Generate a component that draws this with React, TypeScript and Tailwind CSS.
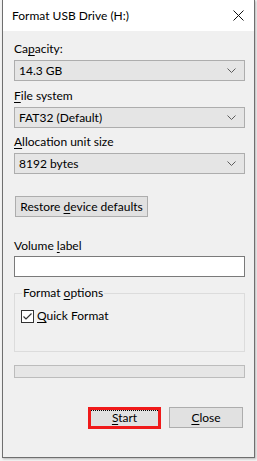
const font = { fontFamily: "Lato, 'Liberation Sans', sans-serif" };

function U({ children }: { children: React.ReactNode }) {
  return <span className="underline underline-offset-[2px] decoration-[1px]">{children}</span>;
}

function Chevron() {
  return (
    <svg width="9" height="5" viewBox="0 0 9 5" className="shrink-0">
      <polyline points="0.5,0.5 4.5,4.5 8.5,0.5" fill="none" stroke="#5c5c5c" strokeWidth="1" />
    </svg>
  );
}

function Combo({ value }: { value: string }) {
  return (
    <div className="mt-[3px] flex h-[21px] w-[231px] items-center justify-between border border-[#adadad] bg-[#e5e5e5] pl-[4px] pr-[8px]">
      <span>{value}</span>
      <Chevron />
    </div>
  );
}

function Label({ children, className = "" }: { children: React.ReactNode; className?: string }) {
  return <div className={`h-[16px] leading-[16px] ${className}`}>{children}</div>;
}

export default function App() {
  return (
    <div className="h-[461px] w-[257px] bg-[#f3f3f3] text-[12px] text-black" style={font}>
      <div className="ml-[2px] flex h-[458px] w-[253px] flex-col border-x border-b border-[#6f6f6f] bg-[#f0f0f0] shadow-[1px_1px_2px_rgba(0,0,0,0.25)]">
        <div className="flex h-[31px] items-center justify-between bg-white pl-[9px] pr-[9px]">
          <span className="text-[12px]">Format USB Drive (H:)</span>
          <svg width="11" height="11" viewBox="0 0 11 11" className="mr-[1px]">
            <path d="M0.5 0.5 L10.5 10.5 M10.5 0.5 L0.5 10.5" stroke="#111" strokeWidth="1" />
          </svg>
        </div>

        <div className="flex flex-col pl-[11px]">
          <Label className="mt-[10px]">
            Ca<U>p</U>acity:
          </Label>
          <Combo value="14.3 GB" />

          <Label className="mt-[7px]">
            <U>F</U>ile system
          </Label>
          <Combo value="FAT32 (Default)" />

          <Label className="mt-[6px]">
            <U>A</U>llocation unit size
          </Label>
          <Combo value="8192 bytes" />

          <button
            type="button"
            className="ml-[1px] mt-[22px] h-[21px] w-[133px] border border-[#adadad] bg-[#e1e1e1] text-center"
          >
            Restore <U>d</U>evice defaults
          </button>

          <Label className="mt-[21px]">
            Volume <U>l</U>abel
          </Label>
          <div className="mt-[2px] h-[21px] w-[231px] border border-[#7a7a7a] bg-white" />

          <fieldset className="mt-[8px] h-[67px] w-[231px] border border-[#dcdcdc] px-[6px]">
            <legend className="ml-[1px] px-[1px] leading-[16px]">
              Format <U>o</U>ptions
            </legend>
            <div className="mt-[6px] flex items-center gap-[3px]">
              <svg width="13" height="13" viewBox="0 0 13 13">
                <rect x="0.5" y="0.5" width="12" height="12" fill="white" stroke="#333" />
                <polyline points="2.5,6.5 5,9 10.5,3.5" fill="none" stroke="#333" strokeWidth="1.2" />
              </svg>
              <span>
                <U>Q</U>uick Format
              </span>
            </div>
          </fieldset>

          <div className="mt-[13px] h-[13px] w-[231px] border border-[#bcbcbc] bg-[#e6e6e6]" />

          <div className="mt-[29px] flex gap-[8px] pl-[74px]">
            <button
              type="button"
              className="relative h-[22px] w-[73px] border-[3px] border-[#f01a1a] bg-[#e1e1e1] text-center leading-[14px]"
            >
              <span className="absolute inset-x-0 top-0 border-t border-dotted border-black" />
              <U>S</U>tart
            </button>
            <button
              type="button"
              className="h-[21px] w-[74px] border border-[#adadad] bg-[#e1e1e1] text-center"
            >
              <U>C</U>lose
            </button>
          </div>
        </div>
      </div>
    </div>
  );
}
